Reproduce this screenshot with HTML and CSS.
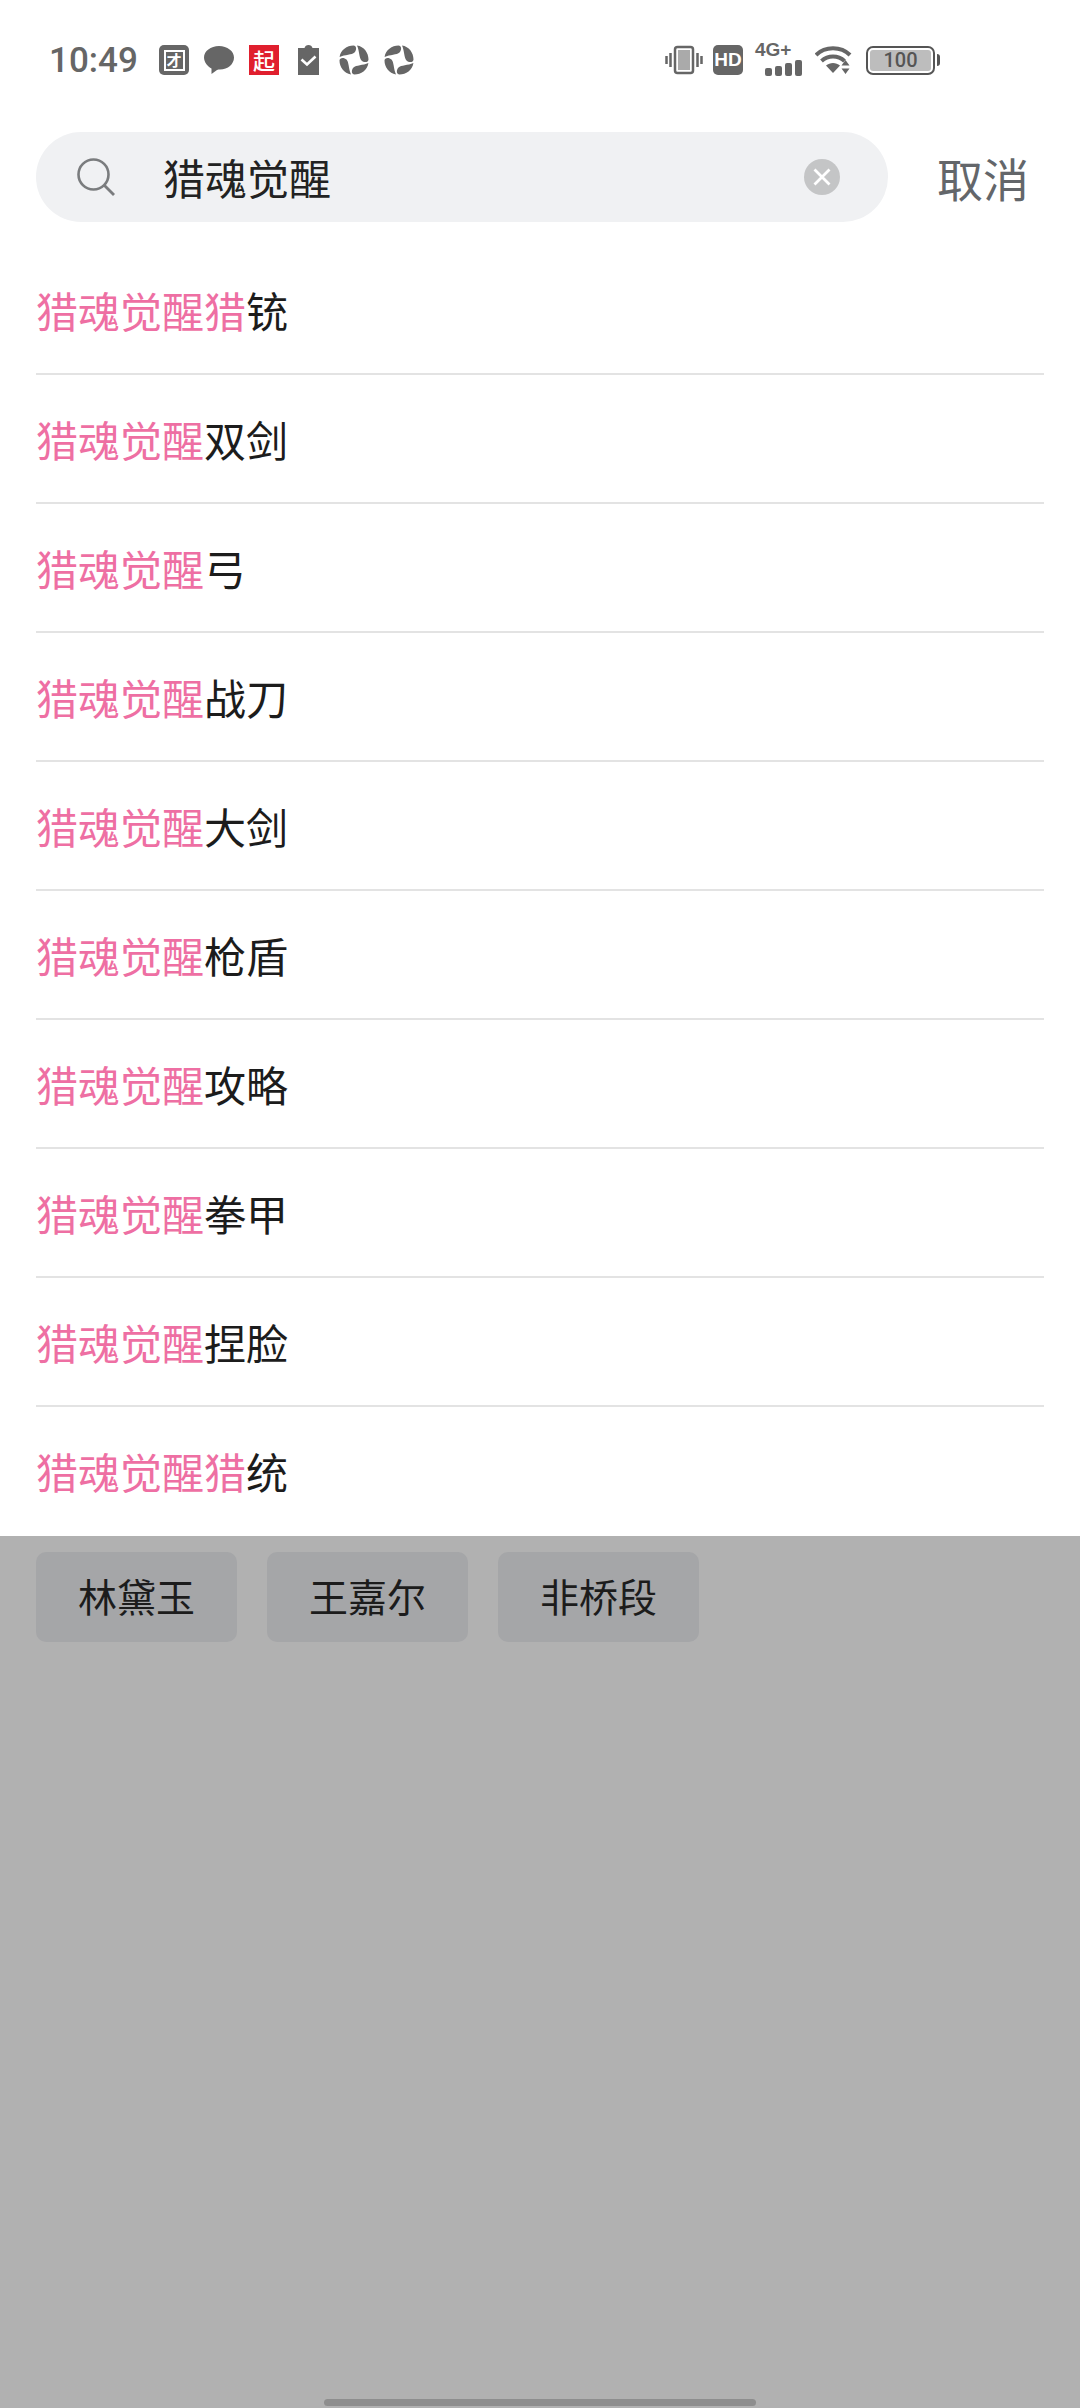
FILE: index.html
```html
<!DOCTYPE html>
<html lang="zh-CN">
<head>
<meta charset="utf-8">
<title>搜索</title>
<link rel="stylesheet" href="styles.css">
</head>
<body>
<svg class="defs" width="0" height="0">
  <symbol id="swirl" viewBox="0 0 30 30">
    <g fill="#666">
      <path id="petal" d="M18 .6C25 1.500 29.500 8 29.500 14.500C29.500 17.500 25 18 22.500 15.500C20 13 20.500 6 18 .6Z"/>
      <use href="#petal" transform="rotate(90 15 15)"/>
      <use href="#petal" transform="rotate(180 15 15)"/>
      <use href="#petal" transform="rotate(270 15 15)"/>
    </g>
  </symbol>
</svg>

<div class="panel">
  <div class="status">
    <span class="time">10:49</span>
    <span class="note tuan"><span>才</span></span>
    <svg class="note" width="30" height="30" viewBox="0 0 30 30"><path d="M15 1C6.700 1 0 6.200 0 12.500C0 17.500 4 21.500 7.500 23.500L7.500 29L13 25C14 24.500 15 24.500 16 24.500C24 24.500 30 19 30 12.500C30 6.200 23.300 1 15 1Z" fill="#666"/></svg>
    <span class="note qi">起</span>
    <svg class="note clip" width="21" height="30" viewBox="0 0 21 30"><path d="M0 3H6.500C7 1 8.500 0 10.500 0C12.500 0 14 1 14.500 3H21V30H0Z" fill="#666"/><path d="M3.500 14.500L9 19.500L17.500 11.500" fill="none" stroke="#fff" stroke-width="2.600"/></svg>
    <svg class="note" width="30" height="30"><use href="#swirl"/></svg>
    <svg class="note" width="30" height="30"><use href="#swirl"/></svg>

    <span class="status-right">
      <svg width="38" height="30" viewBox="0 0 38 30"><path d="M1.500 11V19M5.500 8V22M32.500 8V22M36.500 11V19" stroke="#666" stroke-width="2.500" fill="none"/><rect x="10" y="2" width="18" height="26" rx="2.500" fill="#fff" stroke="#666" stroke-width="2.500"/><rect x="13" y="5" width="12" height="20" fill="#aaa"/></svg>
      <span class="hd">HD</span>
      <span class="net">
        <span class="net-label">4G+</span>
        <span class="bars"><i class="b1"></i><i class="b2"></i><i class="b3"></i><i class="b4"></i></span>
      </span>
      <svg class="wifi" width="37" height="30" viewBox="0 0 37 30"><path d="M1 10C10 1 26 1 35 10M6.500 16C13 10 23 10 29.500 16" fill="none" stroke="#666" stroke-width="4"/><path d="M11 20.500C15 17 21 17 25 20.500L18 28Z" fill="#666"/><path d="M30.500 15L26.500 20.500H34.500ZM30.500 29L26.500 23.500H34.500Z" fill="#666"/></svg>
      <span class="battery"><span class="level">100</span></span>
    </span>
  </div>

  <div class="search-row">
    <div class="search">
      <svg class="search-icon" width="38" height="38" viewBox="0 0 38 38"><circle cx="16.500" cy="16.500" r="15" fill="none" stroke="#7a7c7e" stroke-width="2.600"/><path d="M27 27L37 37" stroke="#7a7c7e" stroke-width="2.800"/></svg>
      <span class="query">猎魂觉醒</span>
      <svg class="clear" width="36" height="36" viewBox="0 0 36 36"><circle cx="18" cy="18" r="18" fill="#c4c5c6"/><path d="M10.500 10.500L25.500 25.500M25.500 10.500L10.500 25.500" stroke="#fff" stroke-width="2.800"/></svg>
    </div>
    <span class="cancel">取消</span>
  </div>

  <ul class="suggest">
    <li><em>猎魂觉醒猎</em>铳</li>
    <li><em>猎魂觉醒</em>双剑</li>
    <li><em>猎魂觉醒</em>弓</li>
    <li><em>猎魂觉醒</em>战刀</li>
    <li><em>猎魂觉醒</em>大剑</li>
    <li><em>猎魂觉醒</em>枪盾</li>
    <li><em>猎魂觉醒</em>攻略</li>
    <li><em>猎魂觉醒</em>拳甲</li>
    <li><em>猎魂觉醒</em>捏脸</li>
    <li><em>猎魂觉醒猎</em>统</li>
  </ul>
</div>

<div class="chips">
  <span class="chip">林黛玉</span>
  <span class="chip">王嘉尔</span>
  <span class="chip">非桥段</span>
</div>

<div class="home-bar"></div>
</body>
</html>
```

FILE: styles.css
```css
html, body {
  margin: 0;
  padding: 0;
}
body {
  width: 1080px;
  height: 2408px;
  background: #b1b1b1;
  font-family: "Noto Sans CJK SC", "Noto Sans", sans-serif;
  color: #1c1c1c;
  overflow: hidden;
  display: flex;
  flex-direction: column;
}
.defs {
  position: absolute;
}

.panel {
  background: #fff;
  height: 1536px;
}

/* status bar */
.status {
  height: 120px;
  box-sizing: border-box;
  padding: 0 145px 0 49px;
  display: flex;
  align-items: center;
}
.time {
  font-family: Roboto, sans-serif;
  font-size: 35px;
  font-weight: 500;
  color: #666;
  width: 110px;
}
.note {
  flex: none;
  margin-right: 15px;
}
.tuan {
  width: 30px;
  height: 30px;
  box-sizing: border-box;
  background: #666;
  border-radius: 5px;
  display: flex;
  align-items: center;
  justify-content: center;
}
.tuan span {
  width: 21px;
  height: 21px;
  box-sizing: border-box;
  border: 2px solid #fff;
  color: #fff;
  font-size: 15px;
  font-weight: 700;
  line-height: 16px;
  text-align: center;
}
.qi {
  width: 30px;
  height: 30px;
  background: #e01f2e;
  color: #fff;
  font-size: 22px;
  font-weight: 500;
  line-height: 29px;
  text-align: center;
}
.clip {
  margin-left: 4px;
  margin-right: 20px;
}
.status-right {
  margin-left: auto;
  display: flex;
  align-items: center;
}
.status-right svg {
  flex: none;
}
.hd {
  width: 30px;
  height: 30px;
  margin-left: 10px;
  background: #666;
  border-radius: 5px;
  color: #fff;
  font-family: "Liberation Sans", sans-serif;
  font-size: 19px;
  font-weight: 700;
  line-height: 30px;
  text-align: center;
}
.net {
  width: 47px;
  height: 32px;
  margin-left: 12px;
  display: flex;
  flex-direction: column;
  position: relative;
}
.net-label {
  font-family: "Liberation Sans", sans-serif;
  font-size: 19px;
  font-weight: 700;
  line-height: 16px;
  color: #666;
  margin-top: -2px;
}
.bars {
  position: absolute;
  right: 0;
  bottom: 0;
  display: flex;
  align-items: flex-end;
  gap: 3px;
}
.bars i {
  width: 7px;
  background: #666;
  border-radius: 2px;
}
.b1 { height: 8px; }
.b2 { height: 10px; }
.b3 { height: 13px; }
.b4 { height: 16px; }
.wifi {
  margin-left: 13px;
}
.battery {
  width: 69px;
  height: 29px;
  margin-left: 14px;
  box-sizing: border-box;
  border: 2.500px solid #555;
  border-radius: 7px;
  padding: 2px;
  display: flex;
  position: relative;
}
.battery::after {
  content: "";
  position: absolute;
  right: -7px;
  top: 6px;
  width: 3px;
  height: 12px;
  background: #555;
  border-radius: 0 3px 3px 0;
}
.level {
  flex: 1;
  background: #bdbdbd;
  border-radius: 3px;
  color: #555;
  font-family: Roboto, sans-serif;
  font-size: 20px;
  font-weight: 500;
  line-height: 20px;
  text-align: center;
}

/* search row */
.search-row {
  margin-top: 12px;
  padding-left: 36px;
  display: flex;
  align-items: center;
}
.search {
  width: 852px;
  height: 90px;
  background: #f0f1f3;
  border-radius: 45px;
  display: flex;
  align-items: center;
  box-sizing: border-box;
  padding: 0 48px 0 41px;
}
.search-icon {
  flex: none;
}
.query {
  margin-left: 48px;
  font-size: 42px;
  line-height: 90px;
  color: #222;
}
.clear {
  margin-left: auto;
}
.cancel {
  margin-left: 49px;
  font-size: 46px;
  line-height: 88px;
  color: #63666a;
}

/* suggestions */
.suggest {
  list-style: none;
  margin: 24px 0 0;
  padding: 0 36px;
  width: 1008px;
}
.suggest li {
  height: 127px;
  line-height: 128px;
  font-size: 42px;
  color: #1c1c1c;
  border-bottom: 2px solid #e3e3e3;
}
.suggest li:last-child {
  border-bottom: 0;
}
.suggest em {
  font-style: normal;
  color: #ee6fa3;
}

/* dimmed content behind the panel */
.chips {
  margin-top: 16px;
  padding-left: 36px;
  display: flex;
  gap: 30px;
}
.chip {
  width: 201px;
  height: 90px;
  background: #a5a6a8;
  border-radius: 10px;
  font-size: 39px;
  line-height: 86px;
  text-align: center;
  color: #1c1c1c;
}

.home-bar {
  width: 432px;
  height: 7px;
  margin: auto auto 2px;
  background: #8e8e8e;
  border-radius: 4px;
}
```
